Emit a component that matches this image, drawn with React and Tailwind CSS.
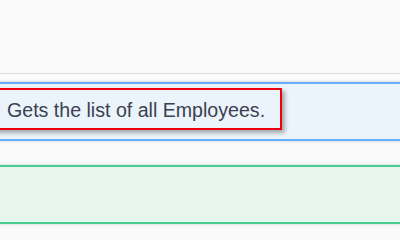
import React from 'react';

export default function App() {
    return (
        <div className="w-[400px] h-[240px] overflow-hidden bg-[#fafafa] font-['Liberation_Sans',Arial,sans-serif]">
            <div className="h-[73px]" />
            <div className="h-px bg-[#dcdcdc]" />
            <div className="h-[8px]" />

            <div className="-mx-[6px] h-[59px] border-2 border-[#61affe] bg-[#ebf3fb] shadow-[0_0_3px_rgba(0,0,0,0.19)] pt-[4px]">
                <div className="-ml-[4px] w-[290px] h-[42px] border-2 border-[#ee0010] shadow-[3px_3px_4px_rgba(0,0,0,0.3)] flex items-center pl-[13px] pt-[3px]">
                    <span className="text-[#3b4151] text-[19.6px] leading-none">Gets the list of all Employees.</span>
                </div>
            </div>

            <div className="h-[24px]" />

            <div className="-mx-[6px] h-[59px] border-2 border-[#49cc90] bg-[#e6f6ee] shadow-[0_0_3px_rgba(0,0,0,0.19)]" />
        </div>
    );
}
